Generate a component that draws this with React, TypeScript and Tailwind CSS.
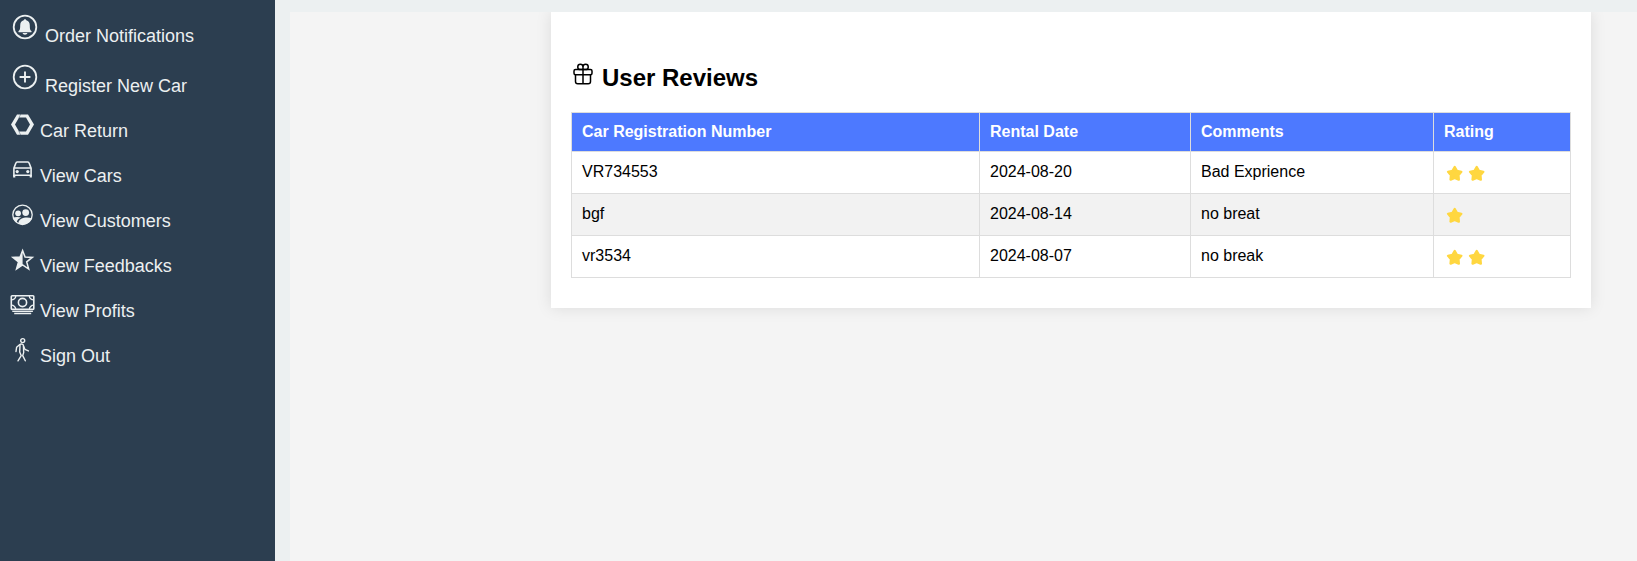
import type { ReactNode } from "react";
import { IoGiftOutline } from "react-icons/io5";

function Glyph({ size = 25, children }: { size?: number; children: ReactNode }) {
  return (
    <svg
      width={size}
      height={size}
      viewBox={`0 0 ${size} ${size}`}
      fill="none"
      stroke="currentColor"
      strokeWidth="1.6"
      className="shrink-0"
    >
      {children}
    </svg>
  );
}

const bell = (
  <Glyph size={30}>
    <circle cx="15" cy="15" r="11.3" strokeWidth="1.8" />
    <path
      d="M15 7.2c.7 0 1.2.5 1.3 1.1 2.4.6 3.5 2.600 3.500 5.100 0 3.800.5 4.600 1.600 5.600.5.500.2 1.300-.5 1.300H9.100c-.7 0-1-.8-.5-1.300 1.100-1 1.600-1.800 1.600-5.600 0-2.500 1.100-4.500 3.500-5.100.1-.6.600-1.100 1.300-1.100zM12.600 21h4.800c-.2 1-1.200 1.700-2.400 1.700s-2.200-.7-2.400-1.700z"
      fill="currentColor"
      stroke="none"
    />
  </Glyph>
);

const plus = (
  <Glyph size={30}>
    <circle cx="15" cy="15" r="11.3" strokeWidth="1.8" />
    <path d="M15 9.6v10.8M9.6 15h10.8" strokeWidth="1.9" />
  </Glyph>
);

const hexagon = (
  <Glyph>
    <path
      fillRule="evenodd"
      d="M7 2.4h11l6 10.200-6 10.200H7L1 12.600zM9 5.600 5 12.600 9 19.500h7l4-6.900L16 5.600z"
      fill="currentColor"
      stroke="none"
    />
    <path d="M10.700 2 9 5.800M8.800 19.200l1.800 3.800" stroke="#2c3e50" strokeWidth="0.4" />
  </Glyph>
);

const car = (
  <Glyph>
    <path d="M3.900 18.300v-7.200l2-5.100c.2-.7.600-1 1.200-1h10.800c.6 0 1 .3 1.200 1l2 5.100v7.200zM3.900 11h17.200" />
    <path d="M4.200 18v2.500M20.800 18v2.500" strokeWidth="2.200" />
    <circle cx="7.200" cy="14.600" r="1.600" fill="currentColor" stroke="none" />
    <circle cx="17.800" cy="14.600" r="1.600" fill="currentColor" stroke="none" />
  </Glyph>
);

const customers = (
  <Glyph>
    <circle cx="12.500" cy="12.800" r="9.700" strokeWidth="1.300" />
    <g fill="currentColor" stroke="none">
      <circle cx="8.100" cy="11.300" r="2.900" />
      <circle cx="15.700" cy="10.600" r="3.400" />
      <path d="M3 15.600c2-.8 5.500-1 8.200-.1-3 1.200-4.200 2.700-4.500 5C4.900 19.300 3.500 17.600 3 15.600z" />
      <path d="M8.200 21.600c.4-3.300 2.600-5.600 7.300-6.100 2.400-.2 4.600.1 6.400.7a10 10 0 0 1-13.700 5.400z" />
    </g>
  </Glyph>
);

const halfStar = (
  <Glyph>
    <path
      d="M12.600 3.500 15.100 10.100l7.200.3-5.600 4.500 2 7.200-6.100-4.100-6.100 4.100 2-7.200-5.600-4.500 7.200-.3z"
      strokeWidth="1.500"
    />
    <path d="M12.600 3.500v14.500l-6.100 4.100 2-7.200-5.600-4.500 7.200-.3z" fill="currentColor" stroke="none" />
  </Glyph>
);

const cash = (
  <Glyph>
    <rect x="1.300" y="3.700" width="22.500" height="13.700" rx="0.800" />
    <circle cx="12.500" cy="10.500" r="4.100" />
    <path
      d="M5.800 3.700c0 2.400-2 4.200-4.600 4.200M19.300 3.700c0 2.400 2 4.200 4.600 4.200M5.800 17.400c0-2.400-2-4.200-4.600-4.200M19.300 17.400c0-2.400 2-4.200 4.600-4.200"
      strokeWidth="1.300"
    />
    <path d="M2.300 19.400h20.600M4.200 21.500h17" strokeWidth="1.400" />
  </Glyph>
);

const walker = (
  <Glyph>
    <g strokeWidth="1.400" strokeLinecap="round" strokeLinejoin="round">
      <circle cx="12.700" cy="3.600" r="2" />
      <path d="M6 14.500l.6-4.200 3.200-2.800c1.300-.9 3.200-.5 3.600.8l.3 7.300-1 3 2.600 5.200" />
      <path d="M10 8.100l-.3 6.800 1.500 3.700-3.200 5.200M13.600 9.300l1.300 3 3.500 1.600" />
    </g>
  </Glyph>
);

function Star() {
  return (
    <svg width="22" height="20" viewBox="0 0 22 20" className="shrink-0">
      <path
        d="M10.700 4.100l2.200 3.700 4.400 1-2.900 3.400.4 4.400-4.100-1.700-4.100 1.700.4-4.400-2.900-3.400 4.400-1z"
        fill="#ffd740"
        stroke="#ffd740"
        strokeWidth="2.400"
        strokeLinejoin="round"
      />
    </svg>
  );
}

type Item = { label: string; icon: ReactNode; large?: boolean };

const items: Item[] = [
  { label: "Order Notifications", icon: bell, large: true },
  { label: "Register New Car", icon: plus, large: true },
  { label: "Car Return", icon: hexagon },
  { label: "View Cars", icon: car },
  { label: "View Customers", icon: customers },
  { label: "View Feedbacks", icon: halfStar },
  { label: "View Profits", icon: cash },
  { label: "Sign Out", icon: walker },
];

const reviews = [
  { car: "VR734553", date: "2024-08-20", comment: "Bad Exprience", rating: 2 },
  { car: "bgf", date: "2024-08-14", comment: "no breat", rating: 1 },
  { car: "vr3534", date: "2024-08-07", comment: "no break", rating: 2 },
];

const headers = ["Car Registration Number", "Rental Date", "Comments", "Rating"];

export default function App() {
  return (
    <div className="flex h-[561px] w-full overflow-hidden bg-[#ecf0f1] font-['Liberation_Sans',Arial,sans-serif]">
      <nav className="w-[275px] shrink-0 bg-[#2c3e50] pt-3 pl-2.5 text-[18px] leading-5 text-[#ecf0f1]">
        {items.map((item) => (
          <a
            key={item.label}
            className={`flex items-baseline gap-[5px] ${item.large ? "h-[50px]" : "h-[45px]"}`}
          >
            {item.icon}
            <span>{item.label}</span>
          </a>
        ))}
      </nav>
      <main className="mt-3 ml-[15px] flex flex-1 items-start overflow-hidden bg-[#f4f4f4] pl-[261px]">
        <section className="h-[296px] w-[1040px] bg-white px-5 pt-[50px] shadow-[0_0_15px_rgba(0,0,0,0.1)]">
          <h2 className="flex h-[50px] items-baseline gap-[7px] text-2xl leading-7 font-bold text-black">
            <IoGiftOutline size={24} />
            User Reviews
          </h2>
          <table className="w-[999px] table-fixed border-collapse text-base leading-[18px] text-black">
            <colgroup>
              <col className="w-[408px]" />
              <col className="w-[211px]" />
              <col className="w-[243px]" />
              <col className="w-[137px]" />
            </colgroup>
            <thead>
              <tr className="h-[39px] bg-[#4d79ff] text-left text-white">
                {headers.map((header) => (
                  <th key={header} className="border border-[#dddddd] px-2.5 py-0 font-bold">
                    {header}
                  </th>
                ))}
              </tr>
            </thead>
            <tbody>
              {reviews.map((review) => (
                <tr key={review.car} className="h-[42px] align-top even:bg-[#f2f2f2]">
                  <td className="border border-[#dddddd] px-2.5 pt-[11px] pb-0">{review.car}</td>
                  <td className="border border-[#dddddd] px-2.5 pt-[11px] pb-0">{review.date}</td>
                  <td className="border border-[#dddddd] px-2.5 pt-[11px] pb-0">{review.comment}</td>
                  <td className="border border-[#dddddd] px-2.5 pt-[11px] pb-0">
                    <div className="flex">
                      {Array.from({ length: review.rating }, (_, i) => (
                        <Star key={i} />
                      ))}
                    </div>
                  </td>
                </tr>
              ))}
            </tbody>
          </table>
        </section>
      </main>
    </div>
  );
}
